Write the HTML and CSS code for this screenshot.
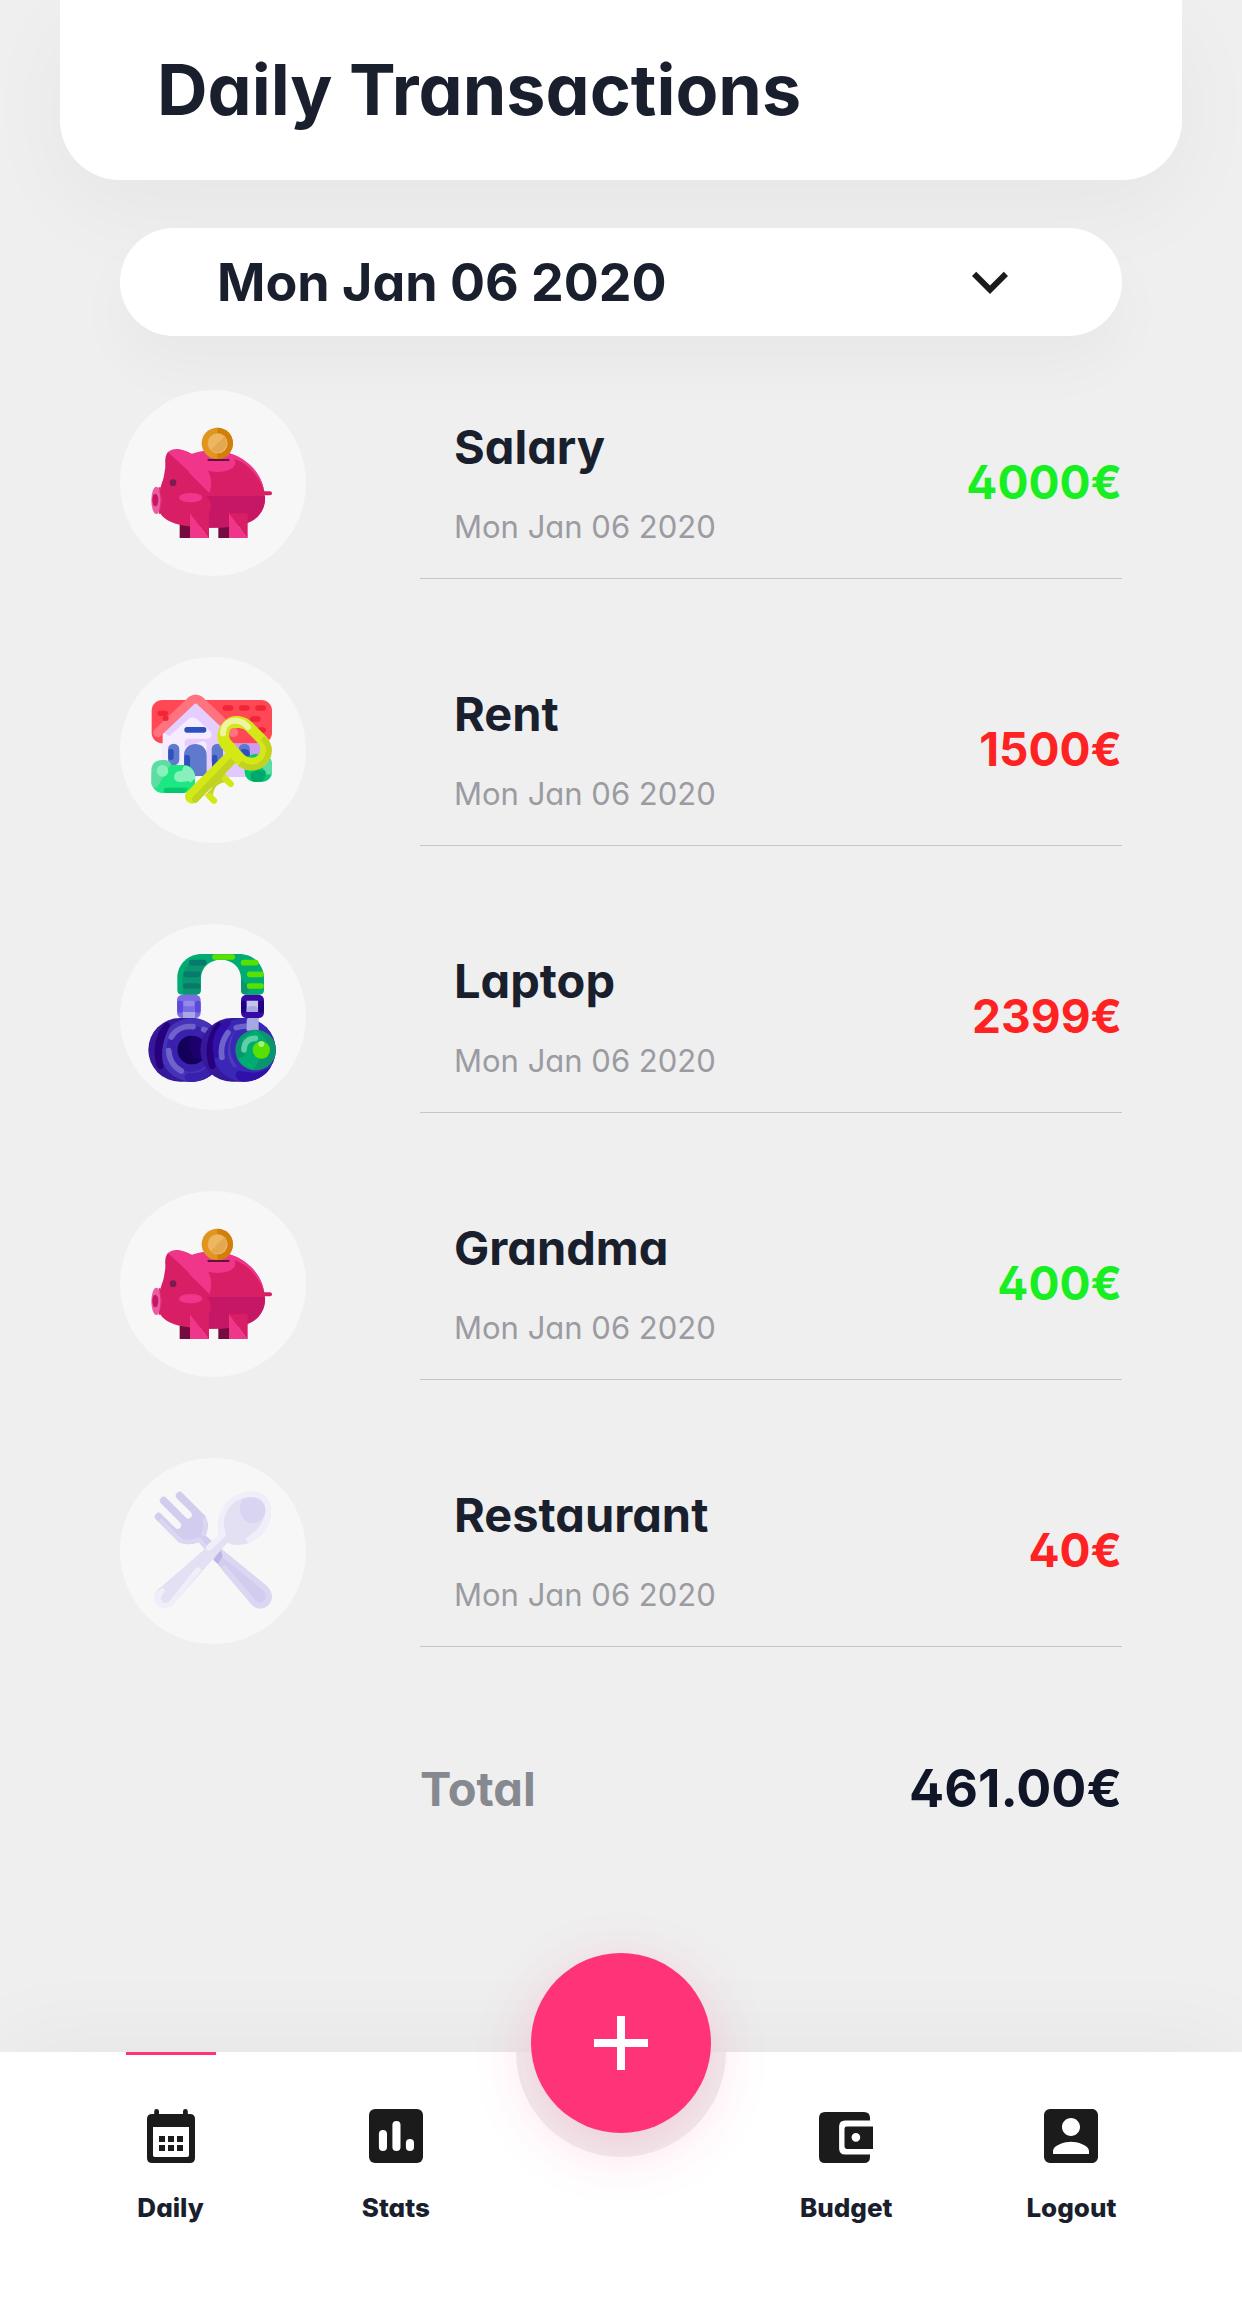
FILE: index.html
```html
<!DOCTYPE html>
<html lang="en">
<head>
<meta charset="utf-8">
<meta name="viewport" content="width=device-width, initial-scale=1">
<title>Daily Transactions</title>
<link rel="stylesheet" href="styles.css">
</head>
<body>
<svg class="sprite" aria-hidden="true">
  <symbol id="piggy" viewBox="30 30 558 558">
    <path fill="#750c40" d="M209 425h40v49h-40zM325 430h40v44h-40z"/>
    <path fill="#d81f66" d="M150 330c5-25 14-42 23-56 28-38 80-62 133-62 92 0 159 66 159 145 0 35-22 61-52 72-30 11-68 14-110 14-90 0-145-15-158-55z"/>
    <path fill="#f0368a" d="M235 226c40-19 95-19 140 0 51 22 82 66 86 102-16-42-48-80-90-91-40 30-80 40-130 0z"/>
    <path fill="#c51765" d="M290 348h175c3 37-21 68-52 80-30 11-75 16-125 15V395c20-15 15-35-5-47z"/>
    <path fill="#d81f66" d="M240 348h48c21 22 20 46-5 65h-43z"/>
    <ellipse fill="#f0368a" cx="323" cy="248" rx="53" ry="28"/>
    <path fill="#63103a" d="M293 237h65v6h-65z"/>
    <path fill="#f0368a" d="M174 216c20-18 52-6 76 8 40 24 65 70 48 116z"/>
    <path fill="#d81f66" d="M174 216c-14 14-9 54 3 78h60l-1-20z"/>
    <path fill="#d81f66" d="M174 216l124 124h-80l-60-30z"/>
    <ellipse fill="#f0368a" cx="242" cy="353" rx="35" ry="14"/>
    <path fill="#d81f66" d="M240 400h57v74h-2zM357 400h56v74h-2z"/>
    <path fill="#f0368a" d="M240 400v74h56zM357 400v74h55z"/>
    <path fill="#d81f66" d="M462 334h18a6 6 0 0 1 0 12h-18z"/>
    <ellipse fill="#ec5ba0" cx="139" cy="361" rx="15" ry="41"/>
    <path fill="#d81f66" d="M146 322h6v79h-6c6-20 6-58 0-79z"/>
    <ellipse fill="#c51765" cx="136" cy="360" rx="9" ry="19"/>
    <circle fill="#7b1c50" cx="189" cy="308" r="10"/>
    <circle fill="#e0951e" cx="322" cy="190" r="47"/>
    <path fill="#d0800a" d="M322 143a47 47 0 0 1 0 94z"/>
    <circle fill="#eeb75f" cx="323" cy="190" r="30"/>
    <path fill="#e3a852" d="M344 169a30 30 0 0 1-42 42z"/>
  </symbol>
</svg>

<header class="header">
  <h1 class="title">Daily Transactions</h1>
</header>

<main class="main">
  <div class="picker">
    <select class="picker-select" aria-label="Date">
      <option>Mon Jan 06 2020</option>
    </select>
    <svg class="picker-arrow" viewBox="0 0 24 24" aria-hidden="true"><path fill="#1b1b1b" d="M16.59 8.59 12 13.17 7.41 8.59 6 10l6 6 6-6z"/></svg>
  </div>

  <ul class="list">
    <li class="row">
      <svg class="avatar" aria-hidden="true"><use href="#piggy"/></svg>
      <div class="entry">
        <div><h2 class="name">Salary</h2><p class="date">Mon Jan 06 2020</p></div>
        <span class="amount income">4000€</span>
      </div>
    </li>
    <li class="row">
      <svg class="avatar" viewBox="30 21 558 558" aria-hidden="true">
        <path fill="#e3c8ff" d="M158 240h280v141H158z"/>
        <path fill="#cb9cf2" d="M340 280h112v34H340z"/>
        <rect fill="#ff4755" x="125" y="150" width="361" height="130" rx="32"/>
        <path fill="#f5edff" d="m158 248 98-98 98 98v133H158z"/>
        <path fill="#e6cdff" d="m160 248 96-98 100 98v132h-66v-92c0-14-10-17-20-12-20 10-40 8-46 14v-12c0-10 6-12 14-12h56c12 0 14-14 6-22l-36-34c-10-10-22-10-32 0l-54 48z"/>
        <path stroke="#ff737e" stroke-width="27" stroke-linecap="round" stroke-linejoin="round" fill="none" d="m143 248 101-96q13-10 26 0l101 96"/>
        <g stroke="#f02536" stroke-width="16" stroke-linecap="round"><path d="M150 190h16M166 205h2M346 174h16M395 174h16M444 174h16M428 207h16M450 240h10"/></g>
        <rect fill="#2e50bd" x="223" y="231" width="66" height="17" rx="8"/>
        <g fill="#5f7acd"><rect x="174" y="281" width="34" height="65" rx="17"/><path d="M222 378v-62c0-45 68-45 68 0v62z"/><rect x="305" y="281" width="34" height="68" rx="17"/><rect x="386" y="281" width="34" height="80" rx="17"/></g>
        <path fill="#2e50bd" d="M175 305q0-8 8-8t8 8v17q0 8-8 8t-8-8zM223 322q0-8 8-8t9 8v45l-17-17zM306 322q0-8 8-8t8 8v30h-16zM388 308q2-11 15-11t16 11v20h-31z"/>
        <path fill="#e3c8ff" d="M340 350h70v31h-70z"/>
        <rect fill="#00c972" x="404" y="312" width="82" height="84" rx="30"/>
        <path fill="#5cdba5" d="M440 322c0-12 15-14 22-10 16 8 24 18 24 34v20q-3 12-17 7z"/>
        <path fill="#00a86b" d="M424 370c10-10 30-10 42-8q4 30-15 33h-21q-12-6-6-25z"/>
        <rect fill="#1ce783" x="125" y="345" width="130" height="84" rx="33"/>
        <path fill="#5cdda4" d="M124 362q0-32 35-32c25 0 30 15 15 24l-30 54c-10 10-20 0-20-8z"/>
        <rect fill="#88f1bb" x="140" y="345" width="35" height="35" rx="17"/>
        <path fill="#88f1bb" d="M192 380q0-18 25-18c0-15 10-18 20-12q15 8 20 33l-16 15q-5-8-9-4-40 8-40-14z"/>
        <path fill="#00c86c" d="M161 422q0-9 10-9h64l-12 16h-54q-8 0-8-7z"/>
        <path fill="#c4d426" d="m284 438 20-22 10-35 32-8 18 26c-30-8-56 8-55 42z"/>
        <path stroke="#d3e814" stroke-width="19" stroke-linecap="round" fill="none" d="m298 438 14 14M346 386l16 16"/>
        <path stroke="#d3e814" stroke-width="42" stroke-linecap="round" d="m246 440 120-120"/>
        <path stroke="#c1d321" stroke-width="20" stroke-linecap="round" d="m256 448 120-124"/>
        <path fill="#d3e814" fill-rule="evenodd" d="M379 198c20 0 35 7 47 19l42 42c22 22 22 55 4 78-24 28-64 32-90 7l-42-43c-25-26-22-61-2-82 11-13 24-21 41-21zm3 36c-24 0-30 23-19 37l38 42c14 14 38 13 46-1 8-12 5-24-4-34l-37-37c-8-6-16-7-24-7z"/>
        <path stroke="#c1d321" stroke-width="18" stroke-linecap="round" fill="none" d="m463 270c14 14 20 36 5 60-18 26-50 28-71 14"/>
        <path stroke="#eff4a4" stroke-width="18" stroke-linecap="round" fill="none" d="M339 250c2-45 50-48 75-19"/>
        <circle fill="#ff737e" cx="371" cy="247" r="13"/>
      </svg>
      <div class="entry">
        <div><h2 class="name">Rent</h2><p class="date">Mon Jan 06 2020</p></div>
        <span class="amount expense">1500€</span>
      </div>
    </li>
    <li class="row">
      <svg class="avatar" viewBox="30 27 558 558" aria-hidden="true">
        <path fill="#00ac71" d="M202 225v-35c0-42 32-73 74-73h112c42 0 74 31 74 73v35q0 14-14 14h-41q-14 0-14-14v-35c0-32-26-56-60-56s-60 24-60 56v35q0 14-14 14h-43q-14 0-14-14z"/>
        <path fill="#0b9470" d="M218 235v-45c0-30 20-52 45-54l26 8c-12 12-18 26-18 45v36q0 14-14 14h-31q-8 0-8-4zM393 190c6 14 24 18 24 40l-10 8q-14 0-14-14z"/>
        <g stroke="#07796d" stroke-width="17" stroke-linecap="round"><path d="M245 143h36M229 178h34M228 213h35"/></g>
        <g stroke="#58e000" stroke-width="17" stroke-linecap="round"><path d="M315 126h52M401 143h36M419 178h34M419 213h34"/></g>
        <rect fill="#7b6ce6" x="201" y="239" width="71" height="70" rx="16"/>
        <rect fill="#5c48d9" x="202" y="257" width="17" height="36" rx="8"/><rect fill="#5c48d9" x="255" y="257" width="17" height="36" rx="8"/>
        <rect fill="#9388ec" x="220" y="257" width="34" height="17" rx="7"/><path fill="#a6a8e4" d="M219 291h36v22h-36z"/>
        <rect fill="#360ba5" x="393" y="239" width="69" height="70" rx="16"/>
        <rect fill="#200083" x="393" y="257" width="17" height="36" rx="8"/><rect fill="#200083" x="445" y="257" width="17" height="36" rx="8"/>
        <path fill="#c3c5ed" d="M410 257h34v34h-34z"/><path fill="#a6a8e4" d="M410 291v-10q4-8 10-8h16q8 2 8 10v8z"/>
        <rect fill="#36189b" x="115" y="309" width="226" height="191" rx="95"/>
        <circle fill="#4433b8" cx="245" cy="405" r="95"/>
        <path fill="#27007d" d="M166 323q14-3 14 10c-20 38-30 74-19 122-5 12-16 8-20 0-14-48-8-96 25-132z"/>
        <circle fill="#3920ad" cx="240" cy="400" r="70"/>
        <path fill="none" stroke="#7062cb" stroke-width="17" stroke-linecap="round" d="M184 366c12-22 36-34 65-31M176 407c2 28 16 50 38 61M281 343q15 5 20 18"/>
        <path fill="none" stroke="#3920ad" stroke-width="26" stroke-linecap="round" d="M237 487q35 4 60-18"/>
        <circle fill="#1d006d" cx="246" cy="405" r="43"/><path fill="#12005b" d="M245 362c-12 20-4 43 0 52 5 16 14 18 32 20-30 28-74 8-74-30 0-25 20-42 42-42z"/>
        <rect fill="#36189b" x="271" y="309" width="226" height="191" rx="95"/>
        <circle fill="#3b27b5" cx="402" cy="405" r="95"/>
        <path fill="#27007d" d="M322 323q14-3 14 10c-20 38-30 74-19 122-5 12-16 8-20 0-14-48-8-96 25-132z"/>
        <path fill="#3010a8" d="M309 380c4-28 17-50 42-65q16 0 10 14c-30 30-36 60-35 95-8 18-22-4-17-44zM388 467q55 15 95-12c-18 30-48 45-82 45-25-2-32-28-13-33z"/>
        <path fill="#4d3bbd" d="M378 345c-20 30-24 68-2 102q8 15-6 8c-28-34-15-90 8-110z"/>
        <path fill="none" stroke="#7062cb" stroke-width="17" stroke-linecap="round" d="M354 353c-16 22-24 44-18 74M379 338q25-8 50-1"/>
        <path fill="#a6a8e4" d="M410 318q0-9 8-9h28v38h-36z"/>
        <circle fill="#0b9470" cx="437" cy="405" r="61"/>
        <path fill="#00ac71" d="M435 344q25 16 35 35l-25 60-15 26c-22-5-40-18-48-38q24 5 20-15l-6-40z"/>
        <path fill="none" stroke="#5fcfa9" stroke-width="17" stroke-linecap="round" d="M402 404c0-20 12-34 34-34"/>
        <circle fill="#58e000" cx="454" cy="405" r="26"/><circle fill="#a6f07a" cx="454" cy="387" r="9"/>
      </svg>
      <div class="entry">
        <div><h2 class="name">Laptop</h2><p class="date">Mon Jan 06 2020</p></div>
        <span class="amount expense">2399€</span>
      </div>
    </li>
    <li class="row">
      <svg class="avatar" aria-hidden="true"><use href="#piggy"/></svg>
      <div class="entry">
        <div><h2 class="name">Grandma</h2><p class="date">Mon Jan 06 2020</p></div>
        <span class="amount income">400€</span>
      </div>
    </li>
    <li class="row">
      <svg class="avatar" viewBox="30 24 558 558" aria-hidden="true">
        <path stroke="#d2ccee" stroke-width="23" stroke-linecap="round" d="m209 137 66 66M161 152l64 64M146 200l66 66"/>
        <path fill="#d2ccee" d="m262 180 22 18c14 20 11 38 3 59l182 151c30 26 15 67-19 67-10 0-18-4-25-12L267 276c-25 10-50 10-67-7l-10-40 32-36z"/>
        <path stroke="#f7f7f7" stroke-width="21" stroke-linecap="round" d="m214 174 21 21M186 209l17 17"/>
        <path fill="none" stroke="#dbd7f3" stroke-width="13" stroke-linecap="round" stroke-linejoin="round" d="m153 213 53 53c16 14 36 12 62 3l18 22M284 210c5 16 2 30-4 42"/>
        <path fill="none" stroke="#dbd7f3" stroke-width="17" stroke-linecap="round" stroke-linejoin="round" d="m337 310 128 104c22 24 8 52-15 53-8 0-14-3-19-9l-87-102"/>
        <path fill="#bdb4e5" d="m310 330 22-30 6 18-14 24z"/>
        <path fill="#e4e0f4" d="M428 125c32 0 55 26 55 58 0 54-44 102-100 102q-18 0-31-7L188 464c-16 16-54 12-54-21 0-16 10-26 20-33l176-153c-20-60 20-132 98-132z"/>
        <path fill="#f0eef9" d="M428 125c32 0 55 26 55 58 0 42-27 80-64 96-10-2-14-14-4-20 35-21 49-50 51-75 2-24-14-43-38-43-70 0-98 62-82 104 3 9 2 12-3 17l-40 38c-12 5-18-5-12-14l39-35c-20-60 20-126 98-126zM156 414q14 4 6 14c-22 18-2 42 16 26l78-98q14-10 19 5l-87 103c-16 16-54 12-54-21 0-12 12-24 22-29z"/>
        <path fill="#d9d4f1" d="M390 178c0-15 2-26 8-31 34-14 68 4 68 34 0 20-15 39-38 39-22 0-38-20-38-42z"/>
      </svg>
      <div class="entry">
        <div><h2 class="name">Restaurant</h2><p class="date">Mon Jan 06 2020</p></div>
        <span class="amount expense">40€</span>
      </div>
    </li>
  </ul>

  <div class="total">
    <span class="total-label">Total</span>
    <strong class="total-value">461.00€</strong>
  </div>
</main>

<nav class="nav" aria-label="Main">
  <a class="tab active" href="#daily">
    <svg class="tab-icon" viewBox="0 0 24 24" aria-hidden="true"><path fill-rule="evenodd" d="M6.4 4.7v-.9q0-.8.8-.8t.8.8v.9h8v-.9q0-.8.8-.8t.8.8v.9h.7q1.7 0 1.7 1.6v13q0 1.7-1.7 1.7H5.7Q4 21 4 19.300V6.300q0-1.600 1.700-1.600zM6 9v9.400q0 .6.6.6h10.800q.6 0 .6-.6V9zm2 3h2v2H8zm3 0h2v2h-2zm3 0h2v2h-2zm-6 3h2v2H8zm3 0h2v2h-2zm3 0h2v2h-2z"/></svg>
    <span>Daily</span>
  </a>
  <a class="tab" href="#stats">
    <svg class="tab-icon" viewBox="0 0 24 24" aria-hidden="true"><rect x="3" y="3" width="18" height="18" rx="2"/><g fill="#fff"><rect x="6.300" y="10" width="2.700" height="7" rx="1.350"/><rect x="10.800" y="7" width="2.700" height="10" rx="1.350"/><rect x="15.300" y="13" width="2.700" height="4" rx="1.350"/></g></svg>
    <span>Stats</span>
  </a>
  <button class="add" type="button" aria-label="Add transaction">
    <svg class="add-icon" viewBox="0 0 54 54" aria-hidden="true"><path fill="#fff" d="M23 0h8v23h23v8H31v23h-8V31H0v-8h23z"/></svg>
  </button>
  <a class="tab" href="#budget">
    <svg class="tab-icon" viewBox="0 0 24 24" aria-hidden="true"><path d="M5 4h13q2 0 2 2v.8h-8.300q-2 0-2 2v7.400q0 2 2 2H20v.8q0 2-2 2H5q-2 0-2-2V6q0-2 2-2z"/><path fill-rule="evenodd" d="M21 8.800v7.500h-8.700q-.8 0-.8-.8V9.600q0-.8.8-.8zm-5.700 2.200a1.450 1.450 0 1 0 0 2.900 1.450 1.450 0 0 0 0-2.900z"/></svg>
    <span>Budget</span>
  </a>
  <a class="tab" href="#logout">
    <svg class="tab-icon" viewBox="0 0 24 24" aria-hidden="true"><path d="M3 5v14a2 2 0 0 0 2 2h14c1.100 0 2-.9 2-2V5c0-1.100-.9-2-2-2H5a2 2 0 0 0-2 2zm12 4c0 1.660-1.340 3-3 3s-3-1.340-3-3 1.340-3 3-3 3 1.340 3 3zm-9 8c0-2 4-3.100 6-3.100s6 1.100 6 3.100v1H6v-1z"/></svg>
    <span>Logout</span>
  </a>
</nav>
</body>
</html>
```
FILE: styles.css
```css
* {
  box-sizing: border-box;
}

body {
  display: flex;
  flex-direction: column;
  min-height: 100vh;
  margin: 0;
  background: #efefef;
  color: #1a1f2e;
  font-family: Inter, "Open Sans", sans-serif;
  font-feature-settings: "cv11", "cv02";
}

h1,
h2,
p,
ul {
  margin: 0;
  padding: 0;
}

.sprite {
  position: absolute;
  width: 0;
  height: 0;
}

.header {
  margin: 0 60px;
  padding: 45px 97px;
  border-radius: 0 0 60px 60px;
  background: #fff;
  box-shadow: 0 30px 90px rgba(0, 0, 0, 0.04);
}

.title {
  font-size: 70px;
  font-weight: 700;
  line-height: 90px;
}

.main {
  flex: 1;
  padding: 48px 120px 0;
}

.picker {
  display: grid;
  align-items: center;
  border-radius: 54px;
  background: #fff;
  box-shadow: 0 30px 60px rgba(0, 0, 0, 0.03);
}

.picker-select,
.picker-arrow {
  grid-area: 1 / 1;
}

.picker-select {
  width: 100%;
  height: 108px;
  padding: 0 97px;
  border: 0;
  border-radius: 54px;
  background: none;
  color: inherit;
  font: inherit;
  font-feature-settings: inherit;
  font-size: 52px;
  font-weight: 700;
  appearance: none;
}

.picker-arrow {
  justify-self: end;
  width: 72px;
  height: 72px;
  margin-right: 96px;
  pointer-events: none;
}

.list {
  display: grid;
  gap: 78px;
  margin-top: 54px;
  list-style: none;
}

.row {
  display: flex;
  gap: 114px;
}

.avatar {
  flex: none;
  width: 186px;
  height: 186px;
  border-radius: 50%;
  background: #f7f7f7;
}

.entry {
  display: flex;
  flex: 1;
  align-items: center;
  justify-content: space-between;
  height: 189px;
  padding: 0 0 4px 34px;
  border-bottom: 1px solid #c6c6c6;
}

.name {
  margin-bottom: 30px;
  font-size: 47px;
  font-weight: 700;
  line-height: 60px;
}

.date {
  color: #9b9ba2;
  font-size: 31px;
  line-height: 40px;
}

.amount {
  font-size: 46px;
  font-weight: 700;
}

.income {
  color: #18ee22;
}

.expense {
  color: #ff2222;
}

.total {
  display: flex;
  align-items: center;
  justify-content: space-between;
  margin: 106px 0 120px 300px;
  font-weight: 700;
  line-height: 72px;
}

.total-label {
  color: #868990;
  font-size: 47px;
}

.total-value {
  color: #101628;
  font-size: 52px;
  font-weight: inherit;
}

.nav {
  position: relative;
  display: grid;
  grid-template-columns: repeat(5, 1fr);
  height: 267px;
  padding: 0 58px;
  background: #fff;
  box-shadow: 0 -15px 90px rgba(0, 0, 0, 0.04);
}

.nav::before {
  position: absolute;
  top: 0;
  left: 50%;
  width: 210px;
  height: 105px;
  margin-left: -105px;
  border-radius: 0 0 105px 105px;
  background: #efefef;
  content: "";
}

.tab {
  display: flex;
  flex-direction: column;
  align-items: center;
  justify-self: center;
  min-width: 90px;
  padding-top: 45px;
  border-top: 3px solid transparent;
  color: inherit;
  font-size: 26px;
  font-weight: 800;
  line-height: 36px;
  text-decoration: none;
}

.tab.active {
  border-color: #ff3377;
}

.tab-icon {
  width: 72px;
  height: 72px;
  margin-bottom: 18px;
  fill: #1b1b1b;
}

.add {
  position: relative;
  display: grid;
  place-items: center;
  justify-self: center;
  width: 180px;
  height: 180px;
  margin-top: -99px;
  padding: 0;
  border: 0;
  border-radius: 50%;
  background: #ff3377;
  box-shadow: 0 15px 60px rgba(255, 51, 119, 0.2);
}

.add-icon {
  width: 54px;
  height: 54px;
}
```
